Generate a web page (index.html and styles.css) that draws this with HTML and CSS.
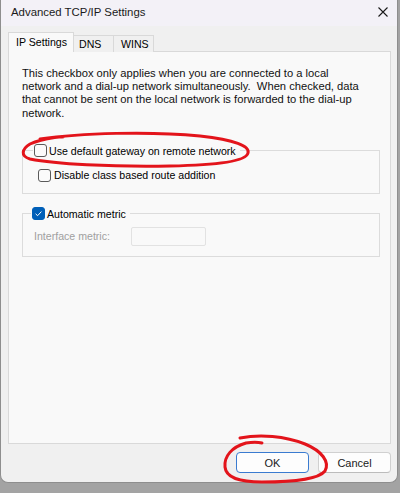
FILE: index.html
```html
<!DOCTYPE html>
<html>
<head>
<meta charset="utf-8">
<link rel="stylesheet" href="styles.css">
</head>
<body>
<div class="window">
  <div class="titlebar">
    <span class="title">Advanced TCP/IP Settings</span>
    <svg class="close" width="12" height="12" viewBox="0 0 12 12"><path d="M1.5 1.5 L10.5 10.5 M10.5 1.5 L1.5 10.5" stroke="#1a1a1a" stroke-width="1.1" fill="none"/></svg>
  </div>
  <div class="body">
    <div class="tabs">
      <div class="tab active">IP Settings</div>
      <div class="tab">DNS</div>
      <div class="tab">WINS</div>
    </div>
    <div class="page">
      <p class="info">This checkbox only applies when you are connected to a local<br>network and a dial-up network simultaneously.&nbsp; When checked, data<br>that cannot be sent on the local network is forwarded to the dial-up<br>network.</p>
      <fieldset class="group g1">
        <legend class="legend"><span class="cb"></span><span class="lbl">Use default gateway on remote network</span></legend>
        <div class="row sub"><span class="cb"></span><span class="lbl">Disable class based route addition</span></div>
      </fieldset>
      <fieldset class="group g2">
        <legend class="legend"><span class="cb checked"><svg width="13" height="13" viewBox="0 0 13 13"><path d="M3.6 6.8 L5.6 8.7 L9.4 4.6" stroke="#fff" stroke-width="1" fill="none"/></svg></span><span class="lbl">Automatic metric</span></legend>
        <div class="row metric"><span class="dim lbl">Interface metric:</span><span class="input"></span></div>
      </fieldset>
    </div>
    <div class="footer">
      <button class="btn default">OK</button>
      <button class="btn">Cancel</button>
    </div>
  </div>
</div>
<svg class="marks" width="400" height="493" viewBox="0 0 400 493">
  <path d="M40 139 C80 133 150 131 200 136 C235 140 250 146 248 153 C246 161 220 165 170 166 C110 167 55 164 30 159 C20 156 22 149 30 144 C45 137 70 136 62 137" stroke="#e3141b" stroke-width="3" fill="none" stroke-linecap="round"/>
  <path d="M240 438 C260 434 285 436 305 444 C322 451 330 462 325 471 C318 480 290 482 262 482 C240 482 226 478 225 467 C224 456 232 447 246 443 C252 442 258 442 262 443" stroke="#e3141b" stroke-width="3" fill="none" stroke-linecap="round"/>
</svg>
</body>
</html>
```
FILE: styles.css
```css
* { box-sizing: border-box; }
html, body { margin: 0; padding: 0; }
body {
  width: 400px;
  height: 493px;
  background: #a3a3a3;
  font-family: "Liberation Sans", Arial, sans-serif;
  font-size: 11.2px;
  color: #000;
  position: relative;
  overflow: hidden;
}
.window {
  width: 398px;
  height: 483px;
  background: #f0f0f0;
  border: 1px solid #8e8e8e;
  border-top: none;
  border-radius: 0 0 8px 8px;
  display: flex;
  flex-direction: column;
  overflow: hidden;
}
.titlebar {
  height: 26px;
  background: #f3f1f7;
  display: flex;
  align-items: center;
  justify-content: space-between;
  padding: 0 10px 2px 10px;
  flex: none;
}
.title { font-size: 11.4px; color: #1a1a1a; }
.close { margin-right: -2px; }
.body {
  flex: 1;
  display: flex;
  flex-direction: column;
  padding: 7px 6px 0 7px;
}
.tabs {
  display: flex;
  align-items: flex-end;
  height: 19px;
  position: relative;
  z-index: 1;
  margin-bottom: -1px;
  font-size: 10.6px;
}
.tab {
  height: 17px;
  border: 1px solid #d9d9d9;
  border-bottom: none;
  background: #f0f0f0;
  padding: 1px 0 0 5px;
  line-height: 15px;
  margin-left: -1px;
}
.tab:first-child { margin-left: 0; }
.tab.active {
  width: 66px;
  height: 20px;
  background: #f9f9f9;
  padding: 2px 0 0 7px;
  line-height: 15px;
  position: relative;
  z-index: 2;
}
.tab:nth-child(2) { width: 41px; }
.tab:nth-child(3) { width: 41px; padding-left: 7px; }
.page {
  height: 393px;
  width: 383px;
  background: #f9f9f9;
  border: 1px solid #d9d9d9;
  padding: 15px 10px 0 13px;
}
.info {
  margin: 0;
  line-height: 13.2px;
  white-space: nowrap;
  color: #111;
}
.lbl { font-size: 10.6px; }
.group {
  margin: 24px 0 0 0;
  border: 1px solid #dcdcdc;
  padding: 0 0 0 8px;
  min-width: 0;
}
.legend {
  padding: 0 4px 0 1px;
  display: flex;
  align-items: center;
  height: 14px;
  gap: 2px;
}
.g1 .legend { margin-left: 2px; }
.g1 { height: 50px; }
.g2 { height: 50px; margin-top: 13px; }
.cb {
  width: 13px;
  height: 13px;
  border: 1px solid #5a5a5a;
  border-radius: 3px;
  background: #fbfbfb;
  display: inline-block;
  flex: none;
}
.cb.checked {
  background: #005fb8;
  border-color: #005fb8;
  position: relative;
}
.cb.checked svg { position: absolute; left: -1px; top: -1px; }
.row { display: flex; align-items: center; gap: 3px; }
.sub { margin: 11px 0 0 7px; }
.metric { margin: 6px 0 0 3px; gap: 0; }
.dim { color: #a0a0a0; width: 97px; }
.input {
  width: 75px;
  height: 19px;
  border: 1px solid #e2e2e2;
  border-radius: 2px;
  background: #f9f9f9;
}
.footer {
  display: flex;
  justify-content: flex-end;
  gap: 9px;
  padding: 8px 0 0 0;
}
.btn {
  width: 73px;
  height: 21px;
  font-family: inherit;
  font-size: 11px;
  color: #1a1a1a;
  background: #fdfdfd;
  border: 1px solid #d0d0d0;
  border-bottom-color: #bcbcbc;
  border-radius: 4px;
  padding: 0;
}
.btn.default { border: 1px solid #3a7bd0; }
.marks { position: absolute; left: 0; top: 0; pointer-events: none; }
```
